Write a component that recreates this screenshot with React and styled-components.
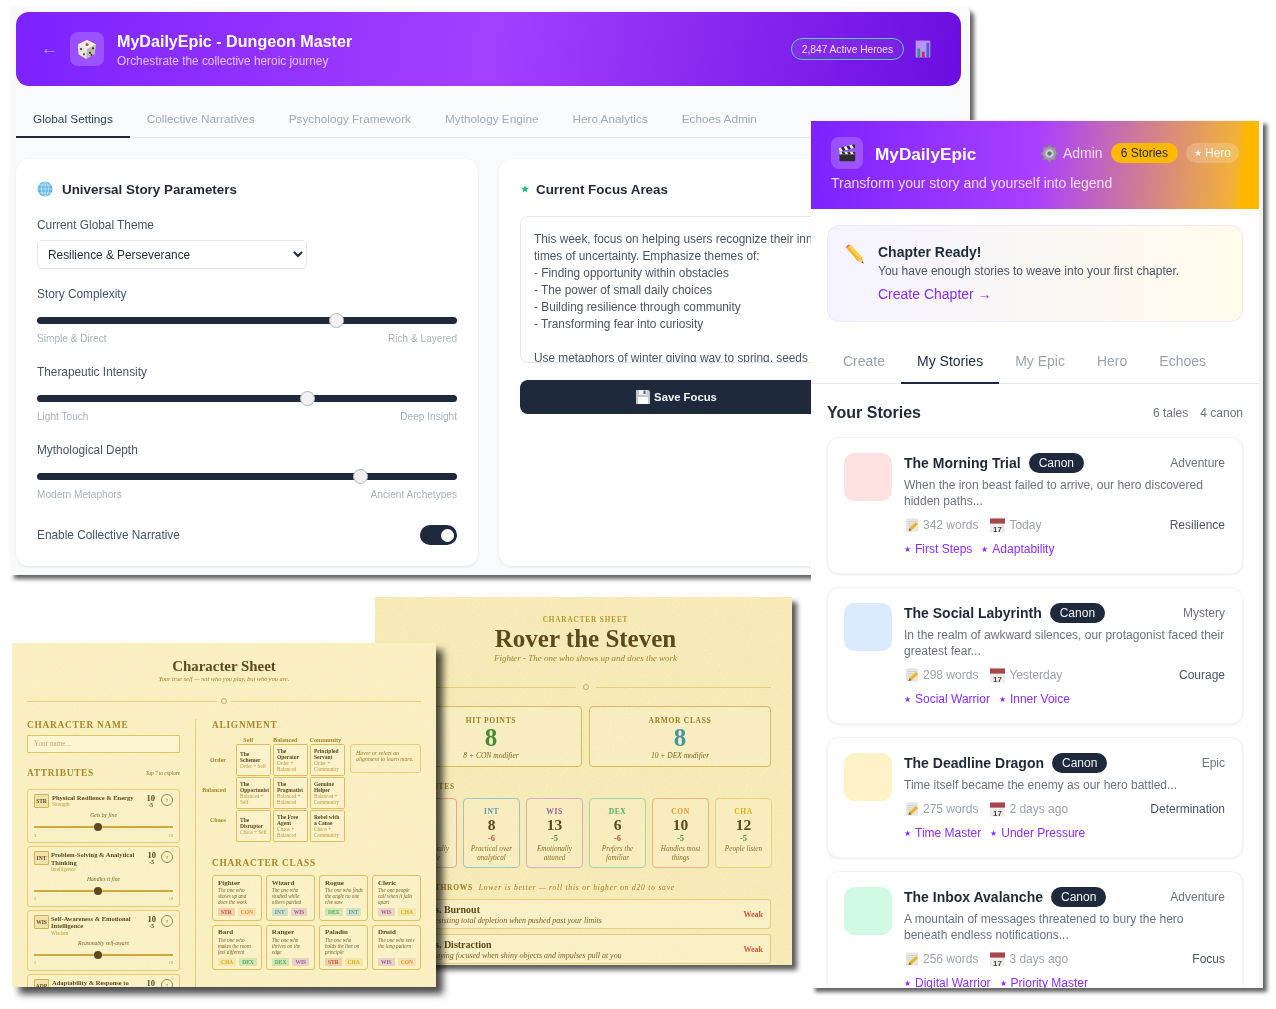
import React from "react";
import styled, { createGlobalStyle } from "styled-components";

const SERIF = `"Liberation Serif", serif`;
const BROWN = "#5c4a1e";
const GOLD = "#a8862a";
const PALE = "#ba9c42";
const LINE = "#e4cc78";

const GRAIN = `url("data:image/svg+xml,%3Csvg xmlns='http://www.w3.org/2000/svg' width='200' height='200'%3E%3Cfilter id='n'%3E%3CfeTurbulence type='fractalNoise' baseFrequency='0.55' numOctaves='3' stitchTiles='stitch'/%3E%3CfeColorMatrix values='0 0 0 0 1 0 0 0 0 0.98 0 0 0 0 0.85 0 0 0 0.9 -0.2'/%3E%3C/filter%3E%3Crect width='200' height='200' filter='url(%23n)' opacity='0.4'/%3E%3C/svg%3E")`;

const GlobalStyle = createGlobalStyle`
  html, body { margin: 0; padding: 0; background: #fff; }
  body { font-family: "Liberation Sans", Arial, sans-serif; color: #1f2937; }
  * { box-sizing: border-box; }
`;

const Desktop = styled.div`
  position: relative;
  width: 1276px;
  height: 1009px;
  overflow: hidden;
  background: #fff;
`;

/* ---- drawn emoji ---- */

const Glyph = styled.svg`
  display: block;
  flex: none;
`;

function Dice({ size }) {
  return (
    <Glyph width={size} height={size} viewBox="0 0 32 32">
      <path d="M16 4 28 10 26 23 15 29 5 23 4 10Z" fill="#d9d6d2" />
      <path d="M16 4 28 10 16 16 4 10Z" fill="#f3f1ee" />
      <path d="M4 10 16 16 15 29 5 23Z" fill="#e9e6e2" />
      <path d="M28 10 16 16 15 29 26 23Z" fill="#bdb8b2" />
      <circle cx="16" cy="10" r="2" fill="#d8433a" />
      <circle cx="8" cy="16" r="1.5" fill="#444" />
      <circle cx="12" cy="23" r="1.5" fill="#444" />
      <circle cx="20" cy="21" r="1.5" fill="#333" />
      <circle cx="24" cy="15" r="1.5" fill="#333" />
      <circle cx="22" cy="24" r="1.3" fill="#333" />
    </Glyph>
  );
}

function Clapper({ size }) {
  return (
    <Glyph width={size} height={size} viewBox="0 0 32 32">
      <rect x="5" y="14" width="23" height="14" rx="1.5" fill="#2d2d2f" />
      <path d="M4 9 27 3 28.500 8 5.500 14Z" fill="#efefef" />
      <path d="M7 8 10 13 14 12 11 7ZM15 6 18 11 22 10 19 5ZM23 4 26 9 28.500 8 27 3Z" fill="#2d2d2f" />
      <rect x="5" y="14" width="23" height="4" fill="#e6e6e6" />
      <path d="M8 14h4l2 4h-4ZM16 14h4l2 4h-4ZM24 14h4v4h-2Z" fill="#2d2d2f" />
    </Glyph>
  );
}

function Pencil({ size }) {
  return (
    <Glyph width={size} height={size} viewBox="0 0 32 32">
      <path d="M9 1 27 21 30 31 20 27 3 7Z" fill="#f6b92b" />
      <path d="M9 1 27 21 23 24 6 4Z" fill="#fbd34d" />
      <path d="M24.500 24.500 30 31 21 27.500 24 23Z" fill="#f0d9b0" />
      <path d="M27.500 28 30 31 26.500 29.500Z" fill="#333" />
      <path d="M5 1 9 1 3 7 1 5Z" fill="#e8747c" />
    </Glyph>
  );
}

function Globe({ size }) {
  return (
    <Glyph width={size} height={size} viewBox="0 0 32 32">
      <circle cx="16" cy="16" r="15" fill="#5fb8e6" />
      <g fill="none" stroke="#d7eefa" strokeWidth="1.500">
        <ellipse cx="16" cy="16" rx="7" ry="15" />
        <path d="M16 1v30M1 16h30M3.500 8h25M3.500 24h25" />
      </g>
    </Glyph>
  );
}

function Gear({ size }) {
  return (
    <Glyph width={size} height={size} viewBox="0 0 32 32">
      {[0, 45, 90, 135, 180, 225, 270, 315].map((a) => (
        <rect key={a} x="13" y="0" width="6" height="7" fill="#8b8895" transform={`rotate(${a} 16 16)`} />
      ))}
      <circle cx="16" cy="16" r="12.500" fill="#9d9aa8" />
      <circle cx="16" cy="16" r="8" fill="#cbc8d6" />
      <circle cx="16" cy="16" r="4" fill="#6f6c7a" />
    </Glyph>
  );
}

function Memo({ size }) {
  return (
    <Glyph width={size} height={size} viewBox="0 0 32 32">
      <rect x="2" y="1" width="28" height="30" fill="#e6e6e3" />
      <path d="M6 8h20M6 13h20M6 18h10" stroke="#c9c9c5" strokeWidth="1.500" />
      <path d="M25 9 30 14 15 28 8 30 10 23Z" fill="#f0b429" />
      <path d="M10 23 8 30 15 28Z" fill="#8a6d3b" />
    </Glyph>
  );
}

function Calendar({ size }) {
  return (
    <Glyph width={size} height={size} viewBox="0 0 32 32">
      <rect x="0" y="1" width="32" height="30" fill="#ededeb" />
      <rect x="0" y="1" width="32" height="11" fill="#a7474b" />
      <text x="16" y="29" textAnchor="middle" fontSize="17" fontWeight="700" fontFamily="Liberation Sans" fill="#444">17</text>
    </Glyph>
  );
}

function Chart({ size }) {
  return (
    <Glyph width={size} height={size} viewBox="0 0 32 32">
      <rect x="3" y="1" width="26" height="30" fill="#c3a4f7" />
      <rect x="6" y="15" width="5" height="16" fill="#2f9e7e" />
      <rect x="14" y="21" width="5" height="10" fill="#c82f5c" />
      <rect x="22" y="5" width="5" height="26" fill="#3d6fd0" />
    </Glyph>
  );
}

function Floppy({ size }) {
  return (
    <Glyph width={size} height={size} viewBox="0 0 32 32">
      <path d="M2 2h25l3 3v25H2Z" fill="#c3c8cf" />
      <rect x="8" y="2" width="15" height="10" fill="#f1f3f5" />
      <rect x="17" y="3" width="4" height="7" fill="#59616b" />
      <rect x="6" y="16" width="20" height="14" fill="#fff" />
    </Glyph>
  );
}

/* ---- dungeon master window ---- */

const AdminWindow = styled.section`
  position: absolute;
  left: 10px;
  top: 7px;
  width: 960px;
  height: 568px;
  padding: 5px 9px 0 6px;
  background: #f8fafc;
  border-radius: 0 6px 0 0;
  box-shadow: 4px 4px 4px rgba(0, 0, 0, 0.62);
  filter: blur(0.3px);
`;

const AdminHeader = styled.header`
  height: 74px;
  display: flex;
  align-items: center;
  padding: 0 29px 0 25px;
  border-radius: 13px;
  background: linear-gradient(100deg, #7b22ff 0%, #a53fff 50%, #6a0ee0 100%);
  color: #fff;
`;

const BackArrow = styled.span`
  width: 15px;
  margin-right: 14px;
  font-size: 17px;
  line-height: 20px;
  color: rgba(255, 255, 255, 0.5);
`;

const IconTile = styled.div`
  flex: none;
  display: flex;
  align-items: center;
  justify-content: center;
  width: ${(p) => p.$size}px;
  height: ${(p) => p.$size}px;
  border-radius: 8px;
  background: rgba(255, 255, 255, 0.2);
`;

const AdminTitles = styled.div`
  margin-left: 13px;
  padding-top: 2px;
`;

const AdminTitle = styled.h1`
  margin: 0;
  font-size: 16.100px;
  line-height: 20px;
  font-weight: 700;
`;

const AdminSubtitle = styled.p`
  margin: 3px 0 0;
  font-size: 11.850px;
  line-height: 15px;
  color: rgba(255, 255, 255, 0.7);
`;

const HeroesPill = styled.span`
  margin-left: auto;
  padding: 0 10px;
  height: 22px;
  display: flex;
  align-items: center;
  border: 1px solid #4fd2b8;
  border-radius: 11px;
  font-size: 10.200px;
  color: rgba(255, 255, 255, 0.85);
  background: rgba(255, 255, 255, 0.06);
`;

const ChartSlot = styled.span`
  margin-left: 10px;
  opacity: 0.9;
`;

const AdminTabs = styled.nav`
  display: flex;
  margin-top: 14px;
  border-bottom: 1px solid #e5e7eb;
`;

const AdminTab = styled.div`
  height: 38px;
  margin-bottom: -1px;
  padding: 0 17px;
  display: flex;
  align-items: center;
  font-size: 11.780px;
  color: ${(p) => (p.$active ? "#334155" : "#a3abb8")};
  border-bottom: 2px solid ${(p) => (p.$active ? "#1e293b" : "transparent")};
`;

const PanelGrid = styled.div`
  display: grid;
  grid-template-columns: 462px 462px;
  gap: 21px;
  margin-top: 21px;
`;

const Panel = styled.div`
  height: 407px;
  padding: 21px;
  background: #fff;
  border-radius: 13px;
  box-shadow: 0 1px 3px rgba(0, 0, 0, 0.09);
`;

const PanelTitle = styled.h2`
  margin: 0 0 ${(p) => p.$after}px;
  height: 18px;
  display: flex;
  align-items: center;
  gap: 9px;
  font-size: 13.400px;
  font-weight: 700;
  color: #1f2937;
`;

const FieldLabel = styled.div`
  font-size: 11.850px;
  line-height: 14px;
  color: #475569;
`;

const ThemeSelect = styled.select`
  display: block;
  width: 270px;
  height: 29px;
  margin: 8px 0 18px;
  padding: 0 6px;
  font-family: inherit;
  font-size: 11.850px;
  color: #1f2937;
  background: #fff;
  border: 1px solid #e5e7eb;
  border-radius: 5px;
`;

const SliderBlock = styled.div`
  margin-bottom: 19px;
`;

const Range = styled.input`
  display: block;
  width: 100%;
  height: 7px;
  margin: 15.500px 0 8.500px;
  appearance: none;
  border-radius: 4px;
  background: #1e293b;

  &::-webkit-slider-thumb {
    appearance: none;
    width: 15px;
    height: 15px;
    border-radius: 50%;
    background: #f1f1f1;
    border: 1px solid #b5b8bd;
  }
`;

const RangeEnds = styled.div`
  display: flex;
  justify-content: space-between;
  font-size: 10.100px;
  line-height: 14px;
  color: #aab1bd;
`;

const ToggleRow = styled.div`
  display: flex;
  align-items: center;
  justify-content: space-between;
  margin-top: 23px;
  height: 20px;
`;

const Toggle = styled.div`
  width: 37px;
  height: 20px;
  padding: 3.500px 3.500px;
  display: flex;
  justify-content: flex-end;
  border-radius: 10px;
  background: #1e293b;

  &::after {
    content: "";
    width: 13px;
    height: 13px;
    border-radius: 50%;
    background: #fff;
  }
`;

const GreenStar = styled.span`
  margin-right: -2px;
  margin-left: 1px;
  color: #10b981;
  font-size: 9px;
`;

const FocusText = styled.textarea`
  display: block;
  width: 420px;
  height: 147px;
  margin: 0;
  padding: 13.500px 13px;
  resize: none;
  overflow: hidden;
  white-space: pre;
  font-family: inherit;
  font-size: 11.850px;
  line-height: 17px;
  color: #4b5563;
  background: #fff;
  border: 1px solid #e5e7eb;
  border-radius: 8px;
`;

const SaveButton = styled.button`
  width: 312px;
  height: 34px;
  margin-top: 17px;
  display: flex;
  align-items: center;
  justify-content: center;
  gap: 3px;
  font-family: inherit;
  font-size: 11.300px;
  font-weight: 700;
  color: #f1f5f9;
  background: #1e293b;
  border: 0;
  border-radius: 8px;
`;

const focusCopy = `This week, focus on helping users recognize their inner strength during
times of uncertainty. Emphasize themes of:
- Finding opportunity within obstacles
- The power of small daily choices
- Building resilience through community
- Transforming fear into curiosity

Use metaphors of winter giving way to spring, seeds of`;

const adminTabs = ["Global Settings", "Collective Narratives", "Psychology Framework", "Mythology Engine", "Hero Analytics", "Echoes Admin"];

const sliders = [
  { label: "Story Complexity", value: 72, low: "Simple & Direct", high: "Rich & Layered" },
  { label: "Therapeutic Intensity", value: 65, low: "Light Touch", high: "Deep Insight" },
  { label: "Mythological Depth", value: 78, low: "Modern Metaphors", high: "Ancient Archetypes" },
];

function AdminPage() {
  return (
    <AdminWindow>
      <AdminHeader>
        <BackArrow>←</BackArrow>
        <IconTile $size={34}><Dice size={24} /></IconTile>
        <AdminTitles>
          <AdminTitle>MyDailyEpic - Dungeon Master</AdminTitle>
          <AdminSubtitle>Orchestrate the collective heroic journey</AdminSubtitle>
        </AdminTitles>
        <HeroesPill>2,847 Active Heroes</HeroesPill>
        <ChartSlot><Chart size={18} /></ChartSlot>
      </AdminHeader>
      <AdminTabs>
        {adminTabs.map((t, i) => (
          <AdminTab key={t} $active={i === 0}>{t}</AdminTab>
        ))}
      </AdminTabs>
      <PanelGrid>
        <Panel>
          <PanelTitle $after={20}><Globe size={16} />Universal Story Parameters</PanelTitle>
          <FieldLabel>Current Global Theme</FieldLabel>
          <ThemeSelect defaultValue="r">
            <option value="r">Resilience &amp; Perseverance</option>
          </ThemeSelect>
          {sliders.map((s) => (
            <SliderBlock key={s.label}>
              <FieldLabel>{s.label}</FieldLabel>
              <Range type="range" defaultValue={s.value} />
              <RangeEnds><span>{s.low}</span><span>{s.high}</span></RangeEnds>
            </SliderBlock>
          ))}
          <ToggleRow>
            <FieldLabel>Enable Collective Narrative</FieldLabel>
            <Toggle />
          </ToggleRow>
        </Panel>
        <Panel>
          <PanelTitle $after={18}><GreenStar>★</GreenStar>Current Focus Areas</PanelTitle>
          <FocusText wrap="off" defaultValue={focusCopy} />
          <SaveButton><Floppy size={16} />Save Focus</SaveButton>
        </Panel>
      </PanelGrid>
    </AdminWindow>
  );
}

/* ---- story app window ---- */

const PhoneWindow = styled.section`
  position: absolute;
  left: 811px;
  top: 120px;
  width: 452px;
  height: 868px;
  padding: 1px 4px 0 0;
  overflow: hidden;
  background: #f3f4f6;
  box-shadow: 4px 4px 4px rgba(0, 0, 0, 0.62);
  filter: blur(0.3px);
`;

const PhoneBody = styled.div`
  background: #fff;
  min-height: 100%;
`;

const PhoneHeader = styled.header`
  height: 88px;
  padding: 16px 20px 0;
  background: linear-gradient(95deg, #7b22ff 0%, #a93fff 50%, #f2b237 94%, #ffb800 96%);
  color: #fff;
`;

const BrandRow = styled.div`
  display: flex;
  align-items: center;
`;

const Brand = styled.div`
  margin: 1px 0 0 12px;
  font-size: 17.200px;
  line-height: 24px;
  font-weight: 700;
`;

const AdminLink = styled.div`
  margin-left: auto;
  display: flex;
  align-items: center;
  gap: 5px;
  font-size: 14px;
  color: rgba(255, 255, 255, 0.8);
`;

const Badge = styled.span`
  margin-left: 8px;
  height: 20px;
  padding: 0 ${(p) => (p.$amber ? 10 : 8)}px;
  display: flex;
  align-items: center;
  gap: 3px;
  border-radius: 10px;
  font-size: 12px;
  color: ${(p) => (p.$amber ? "#1f2937" : "rgba(255,255,255,0.9)")};
  background: ${(p) => (p.$amber ? "#ffb800" : "rgba(255,255,255,0.2)")};

  small {
    font-size: 8.500px;
  }
`;

const Tagline = styled.p`
  margin: 6px 0 0;
  font-size: 14px;
  line-height: 16px;
  color: rgba(255, 255, 255, 0.8);
`;

const ChapterBanner = styled.div`
  margin: 16px 16px 0;
  height: 97px;
  padding: 18px 17px;
  display: flex;
  gap: 13px;
  border: 1px solid #ece8fb;
  border-radius: 12px;
  background: linear-gradient(90deg, #f5f3ff, #fffbeb);
`;

const ChapterTitle = styled.div`
  font-size: 14px;
  line-height: 16px;
  font-weight: 700;
  color: #1f2937;
`;

const ChapterCopy = styled.div`
  margin-top: 3px;
  font-size: 12px;
  line-height: 16px;
  color: #4b5563;
`;

const ChapterLink = styled.div`
  margin-top: 5px;
  font-size: 14px;
  line-height: 20px;
  color: #8b2cff;
`;

const PhoneTabs = styled.nav`
  display: flex;
  margin-top: 18px;
  padding-left: 16px;
  border-bottom: 1px solid #e5e7eb;
`;

const PhoneTab = styled.div`
  height: 44px;
  margin-bottom: -1px;
  padding: 0 16px;
  display: flex;
  align-items: center;
  font-size: 14px;
  color: ${(p) => (p.$active ? "#1f2937" : "#9ca3af")};
  border-bottom: 2px solid ${(p) => (p.$active ? "#1e293b" : "transparent")};
`;

const StoriesHead = styled.div`
  display: flex;
  align-items: center;
  margin: 19px 16px 14px;
  height: 20px;
`;

const StoriesTitle = styled.h2`
  margin: 0 auto 0 0;
  font-size: 16px;
  font-weight: 700;
  color: #1f2937;
`;

const Count = styled.span`
  margin-left: 12px;
  font-size: 12px;
  color: #6b7280;
`;

const StoryList = styled.div`
  display: flex;
  flex-direction: column;
  gap: 13px;
  margin: 0 16px;
`;

const StoryCard = styled.article`
  display: flex;
  gap: 12px;
  padding: 15px 17px 16px 16px;
  border: 1px solid #f3f4f6;
  border-radius: 12px;
  background: #fff;
  box-shadow: 0 1px 3px rgba(0, 0, 0, 0.08);
`;

const Thumb = styled.div`
  flex: none;
  width: 48px;
  height: 48px;
  border-radius: 10px;
  background: ${(p) => p.$color};
`;

const StoryMain = styled.div`
  flex: 1;
  min-width: 0;
`;

const StoryTop = styled.div`
  display: flex;
  align-items: center;
  height: 20px;
`;

const StoryName = styled.h3`
  margin: 0;
  font-size: 14px;
  font-weight: 700;
  color: #1f2937;
`;

const CanonPill = styled.span`
  margin-left: 8px;
  height: 20px;
  padding: 0 10px;
  display: flex;
  align-items: center;
  border-radius: 10px;
  font-size: 12px;
  color: #f1f5f9;
  background: #1e293b;
`;

const Genre = styled.span`
  margin-left: auto;
  font-size: 12px;
  color: #6b7280;
`;

const StoryBlurb = styled.p`
  margin: 4px 0 0;
  font-size: 12px;
  line-height: 16px;
  color: #6b7280;
`;

const MetaRow = styled.div`
  display: flex;
  align-items: center;
  height: 16px;
  margin-top: 8px;
  font-size: 12px;
  color: #9ca3af;
`;

const MetaItem = styled.span`
  display: flex;
  align-items: center;
  gap: 4px;
  margin-left: 1px;
  margin-right: 11px;
`;

const Virtue = styled.span`
  margin-left: auto;
  color: #4b5563;
`;

const TagRow = styled.div`
  display: flex;
  height: 16px;
  margin-top: 8px;
  gap: 9px;
`;

const Trait = styled.span`
  display: flex;
  align-items: center;
  gap: 4px;
  font-size: 12px;
  color: #8b2cff;

  small {
    font-size: 8px;
  }
`;

const stories = [
  { name: "The Morning Trial", color: "#fee2e2", genre: "Adventure", blurb: "When the iron beast failed to arrive, our hero discovered hidden paths...", words: 342, when: "Today", virtue: "Resilience", tags: ["First Steps", "Adaptability"] },
  { name: "The Social Labyrinth", color: "#dbeafe", genre: "Mystery", blurb: "In the realm of awkward silences, our protagonist faced their greatest fear...", words: 298, when: "Yesterday", virtue: "Courage", tags: ["Social Warrior", "Inner Voice"] },
  { name: "The Deadline Dragon", color: "#fef3c7", genre: "Epic", blurb: "Time itself became the enemy as our hero battled...", words: 275, when: "2 days ago", virtue: "Determination", tags: ["Time Master", "Under Pressure"] },
  { name: "The Inbox Avalanche", color: "#d1fae5", genre: "Adventure", blurb: "A mountain of messages threatened to bury the hero beneath endless notifications...", words: 256, when: "3 days ago", virtue: "Focus", tags: ["Digital Warrior", "Priority Master"] },
];

function StoryPage() {
  return (
    <PhoneWindow>
      <PhoneBody>
        <PhoneHeader>
          <BrandRow>
            <IconTile $size={32}><Clapper size={22} /></IconTile>
            <Brand>MyDailyEpic</Brand>
            <AdminLink><Gear size={17} />Admin</AdminLink>
            <Badge $amber>6 Stories</Badge>
            <Badge><small>★</small>Hero</Badge>
          </BrandRow>
          <Tagline>Transform your story and yourself into legend</Tagline>
        </PhoneHeader>
        <ChapterBanner>
          <Pencil size={20} />
          <div>
            <ChapterTitle>Chapter Ready!</ChapterTitle>
            <ChapterCopy>You have enough stories to weave into your first chapter.</ChapterCopy>
            <ChapterLink>Create Chapter →</ChapterLink>
          </div>
        </ChapterBanner>
        <PhoneTabs>
          {["Create", "My Stories", "My Epic", "Hero", "Echoes"].map((t) => (
            <PhoneTab key={t} $active={t === "My Stories"}>{t}</PhoneTab>
          ))}
        </PhoneTabs>
        <StoriesHead>
          <StoriesTitle>Your Stories</StoriesTitle>
          <Count>6 tales</Count>
          <Count>4 canon</Count>
        </StoriesHead>
        <StoryList>
          {stories.map((s) => (
            <StoryCard key={s.name}>
              <Thumb $color={s.color} />
              <StoryMain>
                <StoryTop>
                  <StoryName>{s.name}</StoryName>
                  <CanonPill>Canon</CanonPill>
                  <Genre>{s.genre}</Genre>
                </StoryTop>
                <StoryBlurb>{s.blurb}</StoryBlurb>
                <MetaRow>
                  <MetaItem><Memo size={14} />{s.words} words</MetaItem>
                  <MetaItem><Calendar size={15} />{s.when}</MetaItem>
                  <Virtue>{s.virtue}</Virtue>
                </MetaRow>
                <TagRow>
                  {s.tags.map((t) => (
                    <Trait key={t}><small>★</small>{t}</Trait>
                  ))}
                </TagRow>
              </StoryMain>
            </StoryCard>
          ))}
        </StoryList>
      </PhoneBody>
    </PhoneWindow>
  );
}

/* ---- parchment sheets ---- */

const Parchment = styled.section`
  position: absolute;
  overflow: hidden;
  font-family: ${SERIF};
  color: ${BROWN};
  background-color: ${(p) => p.$tone};
  background-image: ${GRAIN};
  filter: blur(0.3px);
`;

const HeroSheet = styled(Parchment)`
  left: 375px;
  top: 597px;
  width: 417px;
  height: 368px;
  padding: 19px 21px 0 25px;
  text-align: center;
  box-shadow: 5px 5px 5px rgba(0, 0, 0, 0.65);
`;

const Eyebrow = styled.div`
  font-size: 7.200px;
  line-height: 9px;
  font-weight: 700;
  letter-spacing: 0.9px;
  color: #b8962e;
`;

const HeroName = styled.h1`
  margin: 1px 0 0;
  font-size: 25px;
  line-height: 26px;
  font-weight: 700;
  color: ${BROWN};
`;

const HeroClass = styled.div`
  margin-top: 1px;
  font-size: 8.960px;
  line-height: 10px;
  font-style: italic;
  color: #a0852e;
`;

const Rule = styled.div`
  display: flex;
  align-items: center;
  gap: ${(p) => p.$gap}px;
  margin-top: ${(p) => p.$top}px;

  &::before,
  &::after {
    content: "";
    flex: 1;
    height: 1px;
    background: ${LINE};
  }

  span {
    flex: none;
    width: ${(p) => p.$dot}px;
    height: ${(p) => p.$dot}px;
    border: 1px solid #c9ae5c;
    border-radius: 50%;
  }
`;

const VitalsGrid = styled.div`
  display: grid;
  grid-template-columns: 1fr 1fr;
  gap: 7px;
  margin-top: 16px;
`;

const VitalBox = styled.div`
  height: 61px;
  padding-top: 8.500px;
  border: 1px solid #d9b95a;
  border-radius: 4px;
  background: rgba(255, 250, 225, 0.25);
`;

const VitalLabel = styled.div`
  font-size: 7.500px;
  line-height: 9px;
  font-weight: 700;
  letter-spacing: 0.7px;
  color: #9b7d24;
`;

const VitalValue = styled.div`
  margin-top: 1.500px;
  font-size: 25px;
  line-height: 23px;
  font-weight: 700;
  color: ${(p) => p.$color};
`;

const VitalNote = styled.div`
  margin-top: 2px;
  font-size: 7.500px;
  line-height: 9px;
  font-style: italic;
  color: #7a6428;
`;

const SectionLine = styled.div`
  display: flex;
  gap: 6px;
  margin-top: ${(p) => p.$top}px;
  font-size: 7.500px;
  line-height: 8px;
  font-weight: 700;
  letter-spacing: 0.7px;
  color: #9b7d24;
  text-align: left;

  em {
    font-weight: 400;
    letter-spacing: 0.8px;
  }
`;

const ScoreGrid = styled.div`
  display: grid;
  grid-template-columns: repeat(6, 57px);
  gap: 6px;
  margin-top: 7px;
`;

const ScoreBox = styled.div`
  height: 70px;
  padding-top: 8px;
  border: 1px solid ${(p) => p.$edge};
  border-radius: 4px;
  background: rgba(255, 250, 225, 0.2);
`;

const ScoreName = styled.div`
  font-size: 7.500px;
  line-height: 9px;
  font-weight: 700;
  letter-spacing: 0.6px;
  color: ${(p) => p.$color};
`;

const ScoreValue = styled.div`
  font-size: 15.500px;
  line-height: 18px;
  font-weight: 700;
`;

const ScoreMod = styled.div`
  font-size: 8.500px;
  line-height: 9px;
  font-weight: 700;
  color: ${(p) => (p.$low ? "#c8503c" : "#4f8a3c")};
`;

const ScoreNote = styled.div`
  margin-top: 2px;
  padding: 0 2px;
  font-size: 7.200px;
  line-height: 9px;
  font-style: italic;
  color: #8a7230;
`;

const SaveRow = styled.div`
  height: 30px;
  margin-top: ${(p) => p.$top}px;
  padding: 0 7px 0 29px;
  display: flex;
  align-items: center;
  justify-content: space-between;
  text-align: left;
  border: 1px solid ${LINE};
  border-radius: 3px;
  background: rgba(255, 250, 225, 0.35);
`;

const SaveName = styled.div`
  font-size: 10px;
  line-height: 11px;
  font-weight: 700;
`;

const SaveNote = styled.div`
  margin-top: 1px;
  font-size: 7.950px;
  line-height: 9px;
  font-style: italic;
  color: #7a6428;
`;

const SaveGrade = styled.span`
  font-size: 8px;
  font-weight: 700;
  color: #d0553a;
`;

const scores = [
  { k: "STR", edge: "#e8a78c", color: "#c8503c", v: 10, m: "-5", low: false, n: "Not especially capable" },
  { k: "INT", edge: "#9cc5c4", color: "#5a9ab0", v: 8, m: "-6", low: true, n: "Practical over analytical" },
  { k: "WIS", edge: "#d3aec6", color: "#9b59a8", v: 13, m: "-5", low: false, n: "Emotionally attuned" },
  { k: "DEX", edge: "#a5d6a0", color: "#4caf6a", v: 6, m: "-6", low: true, n: "Prefers the familiar" },
  { k: "CON", edge: "#f0b57c", color: "#e8922e", v: 10, m: "-5", low: false, n: "Handles most things" },
  { k: "CHA", edge: "#ebd07a", color: "#d9b414", v: 12, m: "-5", low: false, n: "People listen" },
];

function HeroPage() {
  return (
    <HeroSheet $tone="#f5e8b0">
      <Eyebrow>CHARACTER SHEET</Eyebrow>
      <HeroName>Rover the Steven</HeroName>
      <HeroClass>Fighter - The one who shows up and does the work</HeroClass>
      <Rule $top={21} $gap={7} $dot={6}><span /></Rule>
      <VitalsGrid>
        <VitalBox>
          <VitalLabel>HIT POINTS</VitalLabel>
          <VitalValue $color="#4a8a3a">8</VitalValue>
          <VitalNote>8 + CON modifier</VitalNote>
        </VitalBox>
        <VitalBox>
          <VitalLabel>ARMOR CLASS</VitalLabel>
          <VitalValue $color="#4a94a8">8</VitalValue>
          <VitalNote>10 + DEX modifier</VitalNote>
        </VitalBox>
      </VitalsGrid>
      <SectionLine $top={16}>ATTRIBUTES</SectionLine>
      <ScoreGrid>
        {scores.map((s) => (
          <ScoreBox key={s.k} $edge={s.edge}>
            <ScoreName $color={s.color}>{s.k}</ScoreName>
            <ScoreValue>{s.v}</ScoreValue>
            <ScoreMod $low={s.low}>{s.m}</ScoreMod>
            <ScoreNote>{s.n}</ScoreNote>
          </ScoreBox>
        ))}
      </ScoreGrid>
      <SectionLine $top={16}>SAVING THROWS <em>Lower is better — roll this or higher on d20 to save</em></SectionLine>
      <SaveRow $top={7}>
        <div>
          <SaveName>vs. Burnout</SaveName>
          <SaveNote>Resisting total depletion when pushed past your limits</SaveNote>
        </div>
        <SaveGrade>Weak</SaveGrade>
      </SaveRow>
      <SaveRow $top={5}>
        <div>
          <SaveName>vs. Distraction</SaveName>
          <SaveNote>Staying focused when shiny objects and impulses pull at you</SaveNote>
        </div>
        <SaveGrade>Weak</SaveGrade>
      </SaveRow>
    </HeroSheet>
  );
}

const BlankSheet = styled(Parchment)`
  left: 12px;
  top: 643px;
  width: 424px;
  height: 344px;
  padding: 16px 15px 0;
  box-shadow: 7px 7px 7px rgba(0, 0, 0, 0.7);
`;

const SheetTitle = styled.h1`
  margin: 0;
  text-align: center;
  font-size: 14.900px;
  line-height: 14px;
  font-weight: 700;
`;

const SheetHint = styled.div`
  margin-top: 2px;
  text-align: center;
  font-size: 6.300px;
  line-height: 7px;
  font-style: italic;
  color: #a0852e;
`;

const SheetColumns = styled.div`
  display: grid;
  grid-template-columns: 169px 1fr;
  margin-top: 15px;
`;

const LeftColumn = styled.div`
  padding: 1px 15px 0 0;
  height: 300px;
  border-right: 1px solid ${LINE};
`;

const RightColumn = styled.div`
  padding: 1px 0 0 16px;
`;

const SheetHeading = styled.h2`
  margin: ${(p) => p.$top || 0}px 0 0;
  font-size: 9.350px;
  line-height: 10px;
  font-weight: 700;
  letter-spacing: 0.75px;
  color: ${GOLD};
`;

const NameInput = styled.input`
  display: block;
  width: 100%;
  height: 18px;
  margin-top: 5px;
  padding: 0 6px;
  font-family: ${SERIF};
  font-size: 7.200px;
  background: rgba(255, 250, 225, 0.5);
  border: 1px solid #e0c565;
  border-radius: 1px;

  &::placeholder {
    color: #c2ae72;
  }
`;

const AttrHead = styled.div`
  display: flex;
  justify-content: space-between;
  align-items: center;
  margin-top: 15px;
  margin-bottom: 11px;

  em {
    font-size: 5.300px;
    color: #8a7230;
  }
`;

const AttrList = styled.div`
  display: flex;
  flex-direction: column;
  gap: 3.300px;
`;

const AttrCard = styled.div`
  padding: 4px 6px 4.500px;
  border: 1px solid ${LINE};
  border-radius: 3px;
  background: rgba(255, 250, 225, 0.15);
`;

const AttrTop = styled.div`
  display: flex;
  align-items: flex-start;
  gap: ${(p) => p.$gap}px;
`;

const AttrCode = styled.span`
  flex: none;
  width: 15px;
  height: 14px;
  display: flex;
  align-items: center;
  justify-content: center;
  font-size: 5.500px;
  font-weight: 700;
  border: 1px solid #d4b24c;
  border-radius: 1px;
  background: rgba(225, 195, 110, 0.3);
`;

const AttrText = styled.div`
  flex: 1;
  min-width: 0;
`;

const AttrName = styled.div`
  font-size: 6.500px;
  line-height: 7.300px;
  font-weight: 700;
`;

const AttrKind = styled.div`
  font-size: 5.200px;
  line-height: 6px;
  color: ${PALE};
`;

const AttrScore = styled.div`
  flex: none;
  text-align: center;
  font-weight: 700;
  font-size: 8.500px;
  line-height: 8px;

  small {
    display: block;
    font-size: 5.500px;
    line-height: 6px;
  }
`;

const HelpDot = styled.span`
  flex: none;
  width: 12px;
  height: 12px;
  margin-left: 3px;
  display: flex;
  align-items: center;
  justify-content: center;
  font-size: 5px;
  border: 1px solid #9a8448;
  border-radius: 50%;
`;

const AttrMood = styled.div`
  margin-top: 4px;
  text-align: center;
  font-size: 5.600px;
  line-height: 6px;
  font-style: italic;
  color: #7a6428;
`;

const AttrTrack = styled.div`
  margin-top: 5px;
  height: 8px;
  display: flex;
  align-items: center;

  &::before {
    content: "";
    flex: 0.46;
    height: 1.500px;
    background: #cfa93a;
  }

  &::after {
    content: "";
    flex: 0.54;
    height: 1.500px;
    background: #cfa93a;
  }

  span {
    flex: none;
    width: 8px;
    height: 8px;
    border-radius: 50%;
    background: #5c4a1e;
  }
`;

const AttrEnds = styled.div`
  display: flex;
  justify-content: space-between;
  margin-top: 1.500px;
  font-size: 4.500px;
  line-height: 5px;
  color: ${PALE};
`;

const AlignWrap = styled.div`
  display: flex;
  gap: 5px;
  margin: 6px 0 0 -8px;
`;

const AlignGrid = styled.div`
  display: grid;
  grid-template-columns: 30px repeat(3, 35.500px);
  grid-template-rows: 8px repeat(3, 33px);
  column-gap: 1.500px;
  width: 141px;
`;

const AxisTop = styled.div`
  padding-right: 10px;
  white-space: nowrap;
  text-align: center;
  font-size: 6.200px;
  line-height: 8px;
  font-weight: 700;
  color: ${GOLD};
`;

const AxisSide = styled.div`
  display: flex;
  align-items: center;
  justify-content: flex-end;
  padding: 0 8px ${(p) => p.$lift}px 0;
  font-size: 6px;
  font-weight: 700;
  color: ${GOLD};
`;

const AlignCell = styled.div`
  margin-bottom: 1.500px;
  padding: 0 2px 0 3.500px;
  display: flex;
  flex-direction: column;
  justify-content: center;
  border: 1px solid #dcbc5c;
  border-radius: 1.500px;
  background: rgba(255, 250, 225, 0.3);
`;

const AlignName = styled.div`
  font-size: 5.500px;
  line-height: 6px;
  font-weight: 700;
`;

const AlignNote = styled.div`
  font-size: 5.200px;
  line-height: 6px;
  color: ${PALE};
`;

const AlignInfo = styled.div`
  flex: 1;
  height: 29px;
  margin-top: 8px;
  padding: 5px 5px;
  font-size: 5.800px;
  line-height: 6.300px;
  font-style: italic;
  color: #9b7d24;
  border: 1px solid ${LINE};
  border-radius: 3px;
`;

const ClassGrid = styled.div`
  display: grid;
  grid-template-columns: repeat(4, 1fr);
  grid-auto-rows: 45.500px;
  gap: 4px;
  margin-top: 7px;
`;

const ClassCard = styled.div`
  padding: 3.500px 4px 0 5px;
  border: 1px solid #dfc060;
  border-radius: 3px;
  background: rgba(255, 250, 225, 0.2);
`;

const ClassName = styled.div`
  font-size: 7px;
  line-height: 7px;
  font-weight: 700;
`;

const ClassBlurb = styled.div`
  height: 18px;
  margin-top: 0.500px;
  font-size: 5.200px;
  line-height: 6px;
  font-style: italic;
  color: #7a6428;
`;

const ClassTags = styled.div`
  display: flex;
  gap: 3px;
  margin-top: 3px;
`;

const ClassTag = styled.span`
  padding: 0 3px;
  height: 8px;
  display: flex;
  align-items: center;
  font-size: 5.500px;
  font-weight: 700;
  color: ${(p) => statColors[p.$k][0]};
  background: ${(p) => statColors[p.$k][1]};
  border-radius: 1px;
`;

const statColors = {
  STR: ["#c8503c", "rgba(225,130,105,.3)"],
  CON: ["#e8922e", "rgba(240,170,100,.22)"],
  INT: ["#5a9ab0", "rgba(120,180,190,.3)"],
  WIS: ["#9b59a8", "rgba(185,140,180,.28)"],
  DEX: ["#4caf6a", "rgba(130,200,130,.3)"],
  CHA: ["#d9b414", "rgba(235,205,100,.3)"],
};

const attrs = [
  { code: "STR", gap: 3, name: "Physical Resilience & Energy", kind: "Strength", mood: "Gets by fine" },
  { code: "INT", gap: 2, name: "Problem-Solving & Analytical Thinking", kind: "Intelligence", mood: "Handles it fine" },
  { code: "WIS", gap: 2, name: "Self-Awareness & Emotional Intelligence", kind: "Wisdom", mood: "Reasonably self-aware" },
  { code: "ADP", gap: 3, name: "Adaptability & Response to Change", kind: "Dexterity", mood: "Goes with it" },
];

const alignment = [
  ["Order", 2, [["The Schemer", "Order + Self"], ["The Operator", "Order + Balanced"], ["Principled Servant", "Order + Community"]]],
  ["Balanced", 8, [["The Opportunist", "Balanced + Self"], ["The Pragmatist", "Balanced + Balanced"], ["Genuine Helper", "Balanced + Community"]]],
  ["Chaos", 14, [["The Disruptor", "Chaos + Self"], ["The Free Agent", "Chaos + Balanced"], ["Rebel with a Cause", "Chaos + Community"]]],
];

const classes = [
  ["Fighter", "The one who shows up and does the work", ["STR", "CON"]],
  ["Wizard", "The one who studied while others partied", ["INT", "WIS"]],
  ["Rogue", "The one who finds the angle no one else saw", ["DEX", "INT"]],
  ["Cleric", "The one people call when it falls apart", ["WIS", "CHA"]],
  ["Bard", "The one who makes the room feel different", ["CHA", "DEX"]],
  ["Ranger", "The one who thrives on the edge", ["DEX", "WIS"]],
  ["Paladin", "The one who holds the line on principle", ["STR", "CHA"]],
  ["Druid", "The one who sees the long pattern", ["WIS", "CON"]],
];

function BlankPage() {
  return (
    <BlankSheet $tone="#f8eebc">
      <SheetTitle>Character Sheet</SheetTitle>
      <SheetHint>Your true self — not who you play, but who you are.</SheetHint>
      <Rule $top={16} $gap={4} $dot={6}><span /></Rule>
      <SheetColumns>
        <LeftColumn>
          <SheetHeading>CHARACTER NAME</SheetHeading>
          <NameInput placeholder="Your name..." />
          <AttrHead>
            <SheetHeading>ATTRIBUTES</SheetHeading>
            <em>Tap ? to explore</em>
          </AttrHead>
          <AttrList>
            {attrs.map((a) => (
              <AttrCard key={a.code}>
                <AttrTop $gap={a.gap}>
                  <AttrCode>{a.code}</AttrCode>
                  <AttrText>
                    <AttrName>{a.name}</AttrName>
                    <AttrKind>{a.kind}</AttrKind>
                  </AttrText>
                  <AttrScore>10<small>-5</small></AttrScore>
                  <HelpDot>?</HelpDot>
                </AttrTop>
                <AttrMood>{a.mood}</AttrMood>
                <AttrTrack><span /></AttrTrack>
                <AttrEnds><span>3</span><span>18</span></AttrEnds>
              </AttrCard>
            ))}
          </AttrList>
        </LeftColumn>
        <RightColumn>
          <SheetHeading>ALIGNMENT</SheetHeading>
          <AlignWrap>
            <AlignGrid>
              <span />
              {["Self", "Balanced", "Community"].map((c) => <AxisTop key={c}>{c}</AxisTop>)}
              {alignment.map(([row, lift, cells]) => (
                <React.Fragment key={row}>
                  <AxisSide $lift={lift}>{row}</AxisSide>
                  {cells.map(([n, d]) => (
                    <AlignCell key={n}>
                      <AlignName>{n}</AlignName>
                      <AlignNote>{d}</AlignNote>
                    </AlignCell>
                  ))}
                </React.Fragment>
              ))}
            </AlignGrid>
            <AlignInfo>Hover or select an alignment to learn more.</AlignInfo>
          </AlignWrap>
          <SheetHeading $top={15}>CHARACTER CLASS</SheetHeading>
          <ClassGrid>
            {classes.map(([n, d, tags]) => (
              <ClassCard key={n}>
                <ClassName>{n}</ClassName>
                <ClassBlurb>{d}</ClassBlurb>
                <ClassTags>
                  {tags.map((t) => <ClassTag key={t} $k={t}>{t}</ClassTag>)}
                </ClassTags>
              </ClassCard>
            ))}
          </ClassGrid>
        </RightColumn>
      </SheetColumns>
    </BlankSheet>
  );
}

export default function App() {
  return (
    <Desktop>
      <GlobalStyle />
      <AdminPage />
      <HeroPage />
      <BlankPage />
      <StoryPage />
    </Desktop>
  );
}
